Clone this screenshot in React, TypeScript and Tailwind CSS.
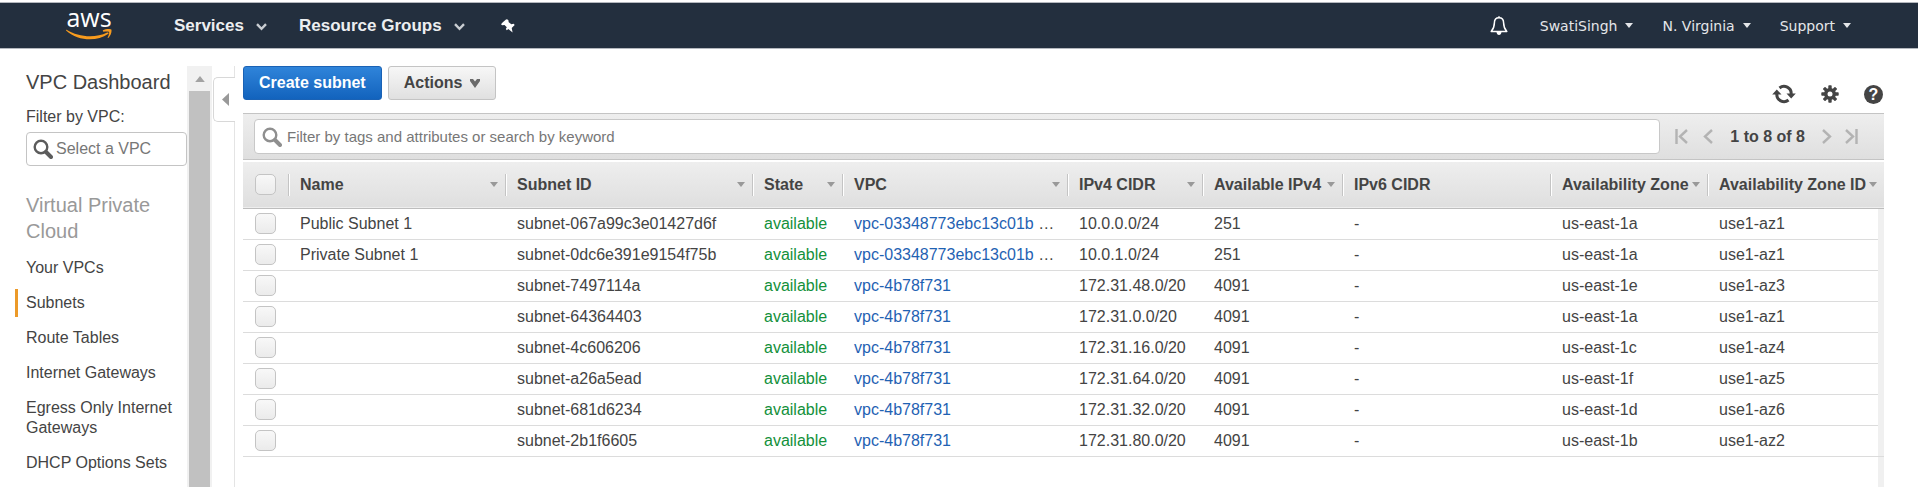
import React from "react";

const columns = [
  { label: "Name", width: "w-[217px]", menu: true },
  { label: "Subnet ID", width: "w-[247px]", menu: true },
  { label: "State", width: "w-[90px]", menu: true },
  { label: "VPC", width: "w-[225px]", menu: true },
  { label: "IPv4 CIDR", width: "w-[135px]", menu: true },
  { label: "Available IPv4", width: "w-[140px]", menu: true },
  { label: "IPv6 CIDR", width: "", menu: false },
  { label: "Availability Zone", width: "w-[157px]", menu: true },
  { label: "Availability Zone ID", width: "w-[171px]", menu: true },
];

const subnets = [
  { name: "Public Subnet 1", id: "subnet-067a99c3e01427d6f", vpc: "vpc-03348773ebc13c01b", more: true, cidr: "10.0.0.0/24", free: "251", zone: "us-east-1a", zoneId: "use1-az1" },
  { name: "Private Subnet 1", id: "subnet-0dc6e391e9154f75b", vpc: "vpc-03348773ebc13c01b", more: true, cidr: "10.0.1.0/24", free: "251", zone: "us-east-1a", zoneId: "use1-az1" },
  { name: "", id: "subnet-7497114a", vpc: "vpc-4b78f731", more: false, cidr: "172.31.48.0/20", free: "4091", zone: "us-east-1e", zoneId: "use1-az3" },
  { name: "", id: "subnet-64364403", vpc: "vpc-4b78f731", more: false, cidr: "172.31.0.0/20", free: "4091", zone: "us-east-1a", zoneId: "use1-az1" },
  { name: "", id: "subnet-4c606206", vpc: "vpc-4b78f731", more: false, cidr: "172.31.16.0/20", free: "4091", zone: "us-east-1c", zoneId: "use1-az4" },
  { name: "", id: "subnet-a26a5ead", vpc: "vpc-4b78f731", more: false, cidr: "172.31.64.0/20", free: "4091", zone: "us-east-1f", zoneId: "use1-az5" },
  { name: "", id: "subnet-681d6234", vpc: "vpc-4b78f731", more: false, cidr: "172.31.32.0/20", free: "4091", zone: "us-east-1d", zoneId: "use1-az6" },
  { name: "", id: "subnet-2b1f6605", vpc: "vpc-4b78f731", more: false, cidr: "172.31.80.0/20", free: "4091", zone: "us-east-1b", zoneId: "use1-az2" },
];

const vpcLinks = [
  "Your VPCs",
  "Subnets",
  "Route Tables",
  "Internet Gateways",
  "Egress Only Internet Gateways",
  "DHCP Options Sets",
];

function SearchIcon({ className }: { className: string }) {
  return (
    <svg viewBox="0 0 20 20" className={className} fill="none" stroke="currentColor" aria-hidden="true">
      <circle cx="8" cy="8" r="6.3" strokeWidth="2.4" />
      <path d="M13 13l5 5" strokeWidth="4" strokeLinecap="round" />
    </svg>
  );
}

function DownTriangle({ className }: { className: string }) {
  return (
    <svg viewBox="0 0 8 5" className={className} fill="currentColor" aria-hidden="true">
      <path d="M0 0h8L4 5z" />
    </svg>
  );
}

function Chevron() {
  return (
    <svg viewBox="0 0 11 8" className="mt-0.5 h-2 w-[11px] text-[#c9cdd2]" fill="none" stroke="currentColor" strokeWidth="2.4" aria-hidden="true">
      <path d="M1 1.2l4.5 4.6L10 1.2" />
    </svg>
  );
}

function AwsLogo() {
  return (
    <a href="#home" aria-label="AWS" className="flex w-[46px] flex-col items-center">
      <span className="h-[18px] font-['Open_Sans',sans-serif] text-[25px] leading-[13px] font-medium text-white">aws</span>
      <svg viewBox="0 0 46 11" className="h-[11px] w-[46px]" aria-hidden="true">
        <path d="M0.6 0.8C12 8 29 9.6 41.2 3.6c1.4-.6 2 .5.8 1.4C31 12.8 12 12.2 0.3 1.7-.1 1.2.1.6.6.8z" fill="#f79b1e" />
        <path d="M37 1.2C39.5-.2 44.5-.3 45.3.6c.8 1-.4 6-3 8.3-.4.3-.8.1-.6-.4.7-1.5 1.9-4.7 1.3-5.5-.5-.8-3.8-.5-5.5-.3-.6 0-.9-.9-.5-1.500z" fill="#f79b1e" />
      </svg>
    </a>
  );
}

function TopBar() {
  return (
    <header className="mt-[2px] flex h-[47px] items-center justify-between border-y border-[#b4b8be] bg-[#232f3e] pr-[67px] pl-[66px]">
      <nav className="flex items-center text-[17px] font-bold text-[#eceef0]">
        <AwsLogo />
        <button type="button" className="ml-[62px] flex items-center gap-3">
          Services <Chevron />
        </button>
        <button type="button" className="ml-8 flex items-center gap-3">
          Resource Groups <Chevron />
        </button>
        <button type="button" aria-label="Pin shortcuts" className="ml-9">
          <svg viewBox="0 0 14 14" className="size-[14px] fill-white" aria-hidden="true">
            <path d="M6.2.2l1.5 1.5-.2 1.2 2.8 2.3 2.3-.4 1.1 1.2-3 3 .9 4.6-4.300-3.500-1.500 1.200-1-1.400 1-1.600-2.300-2.400-2.300.3L0 5.200l1.800-1.900L5 .5z" />
          </svg>
        </button>
      </nav>
      <nav className="flex items-center font-['DejaVu_Sans',sans-serif] text-[14px] text-[#e4e6e9]">
        <button type="button" aria-label="Notifications" className="mr-8">
          <svg viewBox="0 0 18 20" className="h-5 w-[18px]" fill="none" stroke="#fff" strokeWidth="1.5" strokeLinejoin="round" aria-hidden="true">
            <path d="M9 1.8c-3.200 0-4.600 2.400-4.600 5 0 4.300-1 6.200-3.200 8.700h15.600c-2.200-2.500-3.200-4.400-3.200-8.700 0-2.600-1.400-5-4.600-5z" />
            <path d="M9 .3v1.5" />
            <path d="M6.5 16h5c-.2 1.900-1.200 2.900-2.500 2.900S6.700 17.900 6.500 16z" fill="#fff" stroke="none" />
          </svg>
        </button>
        <button type="button" className="mr-[29px] flex items-center gap-2">
          SwatiSingh <DownTriangle className="h-[5px] w-2" />
        </button>
        <button type="button" className="mr-[29px] flex items-center gap-2">
          N. Virginia <DownTriangle className="h-[5px] w-2" />
        </button>
        <button type="button" className="flex items-center gap-2">
          Support <DownTriangle className="h-[5px] w-2" />
        </button>
      </nav>
    </header>
  );
}

function Sidebar() {
  return (
    <aside className="flex w-[212px] shrink-0">
      <div className="min-w-0 flex-1 pl-[26px]">
        <h1 className="mt-1 text-[20px] leading-6">VPC Dashboard</h1>
        <label htmlFor="vpc-filter" className="mt-[13px] block leading-5">
          Filter by VPC:
        </label>
        <div className="mt-[5px] flex h-[34px] items-center gap-[3px] rounded-[4px] border border-[#c4c4c4] pl-1.5">
          <SearchIcon className="size-5 shrink-0 text-[#5c5c5c]" />
          <input id="vpc-filter" placeholder="Select a VPC" className="w-full min-w-0 bg-transparent outline-none placeholder:text-[#777]" />
        </div>
        <h2 className="mt-[26px] text-[20px] leading-[26px] text-[#999]">Virtual Private Cloud</h2>
        <ul className="mt-[14px] flex flex-col gap-[15px]">
          {vpcLinks.map((link) => (
            <li key={link} className="relative leading-5">
              {link === "Subnets" && <span className="absolute -top-1 -left-[11px] h-7 w-[3px] bg-[#ec9a29]" />}
              <a href="#vpc">{link}</a>
            </li>
          ))}
        </ul>
      </div>
      <div className="flex w-[25px] shrink-0 flex-col border-x-2 border-[#f1f1f1] bg-[#c1c1c1]">
        <button type="button" aria-label="Scroll up" className="flex h-[25px] items-center justify-center bg-[#f1f1f1]">
          <DownTriangle className="h-1.5 w-3 rotate-180 text-[#a3a3a3]" />
        </button>
      </div>
    </aside>
  );
}

function Collapser() {
  return (
    <div className="flex w-[23px] shrink-0 flex-col">
      <div className="h-[11px] border-r border-[#e4e4e4]" />
      <button type="button" aria-label="Collapse navigation" className="ml-px flex h-[45px] items-center justify-center rounded-l-[5px] border border-r-0 border-[#d8d8d8]">
        <svg viewBox="0 0 7 13" className="ml-0.5 h-[13px] w-[7px] fill-[#999]" aria-hidden="true">
          <path d="M7 0v13L0 6.5z" />
        </svg>
      </button>
      <div className="flex-1 border-r border-[#e4e4e4]" />
    </div>
  );
}

function PagerIcon({ d }: { d: string }) {
  return (
    <svg viewBox="0 0 13 15" className="h-[15px] w-[13px]" fill="none" stroke="#b3b3b3" strokeWidth="2.4" aria-hidden="true">
      <path d={d} />
    </svg>
  );
}

const boxClass =
  "block size-[21px] appearance-none rounded-[5px] border border-[#c4c4c4] bg-linear-to-b from-[#f8f8f8] to-[#ebebeb]";

function SubnetTable() {
  return (
    <table className="w-full table-fixed border-collapse text-left">
      <colgroup>
        <col className="w-[45px]" />
        {columns.map((column) => (
          <col key={column.label} className={column.width} />
        ))}
        <col className="w-1.5" />
      </colgroup>
      <thead>
        <tr className="h-[46px] border-b border-[#bdbdbd] bg-linear-to-b from-[#eee] to-[#dfdfdf]">
          <th className="p-0 pl-3">
            <input type="checkbox" aria-label="Select all subnets" className={boxClass} />
          </th>
          {columns.map((column, index) => (
            <th key={column.label} colSpan={index === columns.length - 1 ? 2 : 1} className="p-0 font-bold text-[#444]">
              <div className="flex h-[22px] items-center justify-between border-l border-[#c4c4c4] pr-[7px] whitespace-nowrap">
                <span className="border-l border-white pl-2.5 leading-[22px]">{column.label}</span>
                {column.menu && <DownTriangle className="h-[5px] w-2 shrink-0 text-[#999]" />}
              </div>
            </th>
          ))}
        </tr>
      </thead>
      <tbody>
        {subnets.map((subnet, index) => (
          <tr key={subnet.id} className="h-[31px] whitespace-nowrap *:border-b *:border-[#dcdcdc] *:py-0">
            <td className="pl-3">
              <input type="checkbox" aria-label={`Select ${subnet.id}`} className={boxClass} />
            </td>
            <td className="pl-3">{subnet.name}</td>
            <td className="pl-3">{subnet.id}</td>
            <td className="pl-3 text-[#12903a]">available</td>
            <td className="pl-3">
              <a href="#vpc" className="text-[#1f62b3]">
                {subnet.vpc}
              </a>
              {subnet.more && " …"}
            </td>
            <td className="pl-3">{subnet.cidr}</td>
            <td className="pl-3">{subnet.free}</td>
            <td className="pl-3">-</td>
            <td className="pl-3">{subnet.zone}</td>
            <td className="pl-3">{subnet.zoneId}</td>
            {index === 0 && <td rowSpan={subnets.length} className="bg-[#f0f0f0]" />}
          </tr>
        ))}
      </tbody>
    </table>
  );
}

function GearIcon() {
  return (
    <svg viewBox="0 0 18 18" className="size-[18px]" aria-hidden="true">
      <g fill="#444">
        <circle cx="9" cy="9" r="6" />
        {[0, 45, 90, 135].map((angle) => (
          <rect key={angle} x="7.300" y="0.3" width="3.400" height="17.4" rx="0.8" transform={`rotate(${angle} 9 9)`} />
        ))}
      </g>
      <circle cx="9" cy="9" r="2.500" fill="#fff" />
    </svg>
  );
}

function Content() {
  return (
    <main className="mr-[34px] ml-2 flex min-w-0 flex-1 flex-col">
      <div className="flex h-[47px] items-start gap-1.5">
        <button type="button" className="h-[34px] rounded-[3px] border border-[#1a62b5] bg-linear-to-b from-[#2f84da] to-[#1263bd] px-[15px] font-bold text-white">
          Create subnet
        </button>
        <button type="button" className="flex h-[34px] items-center gap-2 rounded-[3px] border border-[#c4c4c4] bg-linear-to-b from-[#f7f7f7] to-[#e0e0e0] px-[15px] font-bold text-[#444]">
          Actions
          <svg viewBox="0 0 10 9" className="h-[9px] w-2.5 fill-[#6a6a6a]" aria-hidden="true">
            <path d="M0 0h3l2 2.500L7 0h3v2L5 9 0 2z" />
          </svg>
        </button>
        <div className="mt-[18px] ml-auto flex items-center gap-[25px]">
          <button type="button" aria-label="Refresh">
            <svg viewBox="0 0 24 20" className="h-5 w-6" aria-hidden="true">
              <g fill="none" stroke="#444" strokeWidth="3">
                <path d="M7.5 4A7.2 7.2 0 0 1 19.2 10" />
                <path d="M16.5 16A7.2 7.2 0 0 1 4.8 10" />
              </g>
              <path d="M14.5 9.5h9.3l-4.600 5zM.2 10.500h9.300L4.800 5.500z" fill="#444" />
            </svg>
          </button>
          <button type="button" aria-label="Settings">
            <GearIcon />
          </button>
          <button type="button" aria-label="Help" className="mr-px size-[19px] rounded-full bg-[#444] text-center leading-[19px] font-bold text-white">
            ?
          </button>
        </div>
      </div>

      <div className="flex h-[47px] items-center border-y border-[#c4c4c4] bg-linear-to-b from-[#eee] to-[#dfdfdf] pr-[26px] pl-[11px]">
        <div className="flex h-[35px] flex-1 items-center gap-[5px] rounded-[4px] border border-[#c8c8c8] bg-white pl-[7px]">
          <SearchIcon className="size-5 shrink-0 text-[#8f8f8f]" />
          <input aria-label="Filter subnets" placeholder="Filter by tags and attributes or search by keyword" className="w-full bg-transparent text-[15px] outline-none placeholder:text-[#777]" />
        </div>
        <div className="ml-[15px] flex items-center">
          <button type="button" aria-label="First page">
            <PagerIcon d="M1.5 0v15M12 1L5 7.500l7 6.500" />
          </button>
          <button type="button" aria-label="Previous page" className="ml-3">
            <PagerIcon d="M12 1L5 7.500l7 6.500" />
          </button>
          <span className="mx-[17px] font-bold text-[#444]">1 to 8 of 8</span>
          <button type="button" aria-label="Next page">
            <PagerIcon d="M1 1l7 6.500L1 14" />
          </button>
          <button type="button" aria-label="Last page" className="ml-2.5">
            <PagerIcon d="M1 1l7 6.500L1 14M11.500 0v15" />
          </button>
        </div>
      </div>

      <div className="mt-0.5 flex flex-1 flex-col">
        <SubnetTable />
        <div className="flex-1 border-r-6 border-[#f0f0f0]" />
      </div>
    </main>
  );
}

export default function App() {
  return (
    <div className="flex min-h-screen flex-col bg-white font-['Liberation_Sans',Arial,sans-serif] text-base leading-5 text-[#444]">
      <TopBar />
      <div className="flex flex-1 pt-[17px]">
        <Sidebar />
        <Collapser />
        <Content />
      </div>
    </div>
  );
}
